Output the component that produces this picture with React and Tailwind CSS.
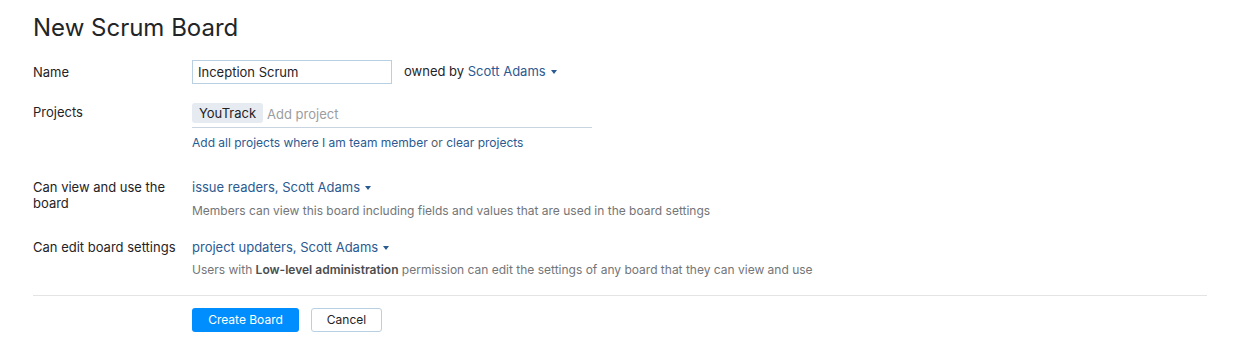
function Caret() {
  return (
    <svg width="6" height="4" viewBox="0 0 6 4" className="ml-[5px] inline-block align-[2px]">
      <path d="M0 0h6L3 4z" fill="#2a5a92" />
    </svg>
  )
}

export default function App() {
  const label = 'w-[159px] shrink-0 text-[13px] leading-[16px] text-[#1f2326]'
  const link = 'text-[#2a5a92]'
  return (
    <div className="min-h-[357px] bg-white px-[33px] pt-[14px] font-['Inter',sans-serif] text-[#1f2326]">
      <h1 className="text-[24px] leading-[28px] font-normal text-[#222528]">New Scrum Board</h1>

      <div className="mt-[18px] flex items-center">
        <div className={label}>Name</div>
        <input
          defaultValue="Inception Scrum"
          className="h-[24px] w-[200px] border border-[#b9d0e3] px-[5px] text-[13px] text-[#1f2326] outline-none"
        />
        <span className="ml-[12px] text-[13px]">
          owned by <span className={link}>Scott Adams</span>
          <Caret />
        </span>
      </div>

      <div className="mt-[17px] flex">
        <div className={label + ' mt-[3px]'}>Projects</div>
        <div>
          <div className="flex h-[27px] w-[400px] items-start border-b border-[#c8d5e1] pt-[2px]">
            <span className="h-[20px] rounded-[3px] bg-[#e5ebf1] px-[7px] text-[13px] leading-[20px] text-[#1f2326]">YouTrack</span>
            <span className="ml-[4px] mt-[3px] text-[13px] leading-[16px] text-[#9b9d9f]">Add project</span>
          </div>
          <div className="mt-[7px] text-[12px] leading-[16px]">
            <span className={link}>Add all projects where I am team member</span>
            <span className="text-[#5b5e61]"> or </span>
            <span className={link}>clear projects</span>
          </div>
        </div>
      </div>

      <div className="mt-[28px] flex">
        <div className={label + ' pr-[12px]'}>Can view and use the board</div>
        <div>
          <div className="text-[13px] leading-[16px]">
            <span className={link}>issue readers, Scott Adams</span>
            <Caret />
          </div>
          <div className="mt-[8px] text-[12px] leading-[16px] text-[#737578]">
            Members can view this board including fields and values that are used in the board settings
          </div>
        </div>
      </div>

      <div className="mt-[20px] flex">
        <div className={label}>Can edit board settings</div>
        <div>
          <div className="text-[13px] leading-[16px]">
            <span className={link}>project updaters, Scott Adams</span>
            <Caret />
          </div>
          <div className="mt-[7px] text-[12px] leading-[16px] text-[#737578]">
            Users with <b className="font-semibold text-[#4a4d50]">Low-level administration</b> permission can edit the settings of any board that they can view and use
          </div>
        </div>
      </div>

      <div className="mt-[17px] w-[1174px] border-t border-[#e4e4e4]" />

      <div className="mt-[12px] flex pl-[159px]">
        <button className="h-[24px] w-[107px] rounded-[3px] bg-[#008eff] text-[12px] text-white">Create Board</button>
        <button className="ml-[12px] h-[24px] w-[71px] rounded-[3px] border border-[#b9d0e3] bg-white text-[12px] text-[#1f2326]">Cancel</button>
      </div>
    </div>
  )
}
